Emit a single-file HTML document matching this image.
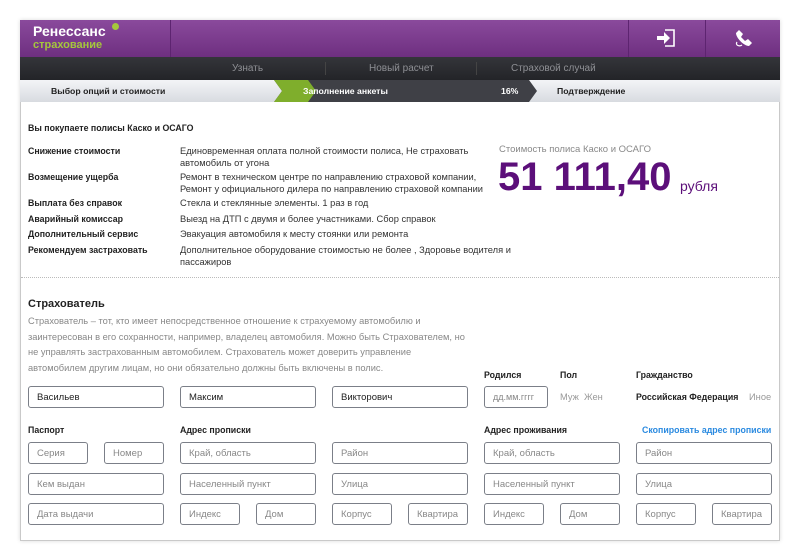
<!DOCTYPE html>
<html><head><meta charset="utf-8"><style>
*{margin:0;padding:0;box-sizing:border-box}
body{width:800px;height:560px;background:#fff;font-family:"Liberation Sans",Arial,sans-serif;position:relative;overflow:hidden}
.box{position:absolute;left:20px;top:20px;width:760px;height:521px;border:1px solid #c9c9c9;box-shadow:0 0 4px rgba(0,0,0,.15);background:#fff}
.a{position:absolute}
.hdr{left:20px;top:20px;width:760px;height:37px;background:linear-gradient(#8a4a9c,#6e2f80)}
.nav{left:20px;top:57px;width:760px;height:23px;background:linear-gradient(#34353a,#232428);color:#8e8f94;font-size:10px}
.steps{left:20px;top:80px;width:760px;height:22px;background:linear-gradient(#f3f4f7,#d8dbe0);font-size:8.7px;font-weight:bold;color:#222}
.lbl{font-size:8.8px;font-weight:bold;color:#222;position:absolute}
.txt{font-size:9.3px;color:#333;position:absolute;line-height:12px}
.in{position:absolute;height:22px;border:1px solid #7b7f88;border-radius:3px;font-size:9.5px;color:#888;padding-left:8px;line-height:21px}
.in.v{color:#222}
</style></head><body>
<div class="box"></div>
<div class="a hdr">
  <div class="a" style="left:13px;top:3px;color:#fff;font-weight:bold;font-size:14px">Ренессанс</div>
  <div class="a" style="left:92px;top:3px;width:7px;height:7px;border-radius:50%;background:#a5c73c"></div>
  <div class="a" style="left:13px;top:19px;color:#a5c73c;font-size:11px;font-weight:bold">страхование</div>
  <div class="a" style="left:150px;top:0;width:1px;height:37px;background:#5d2470"></div>
  <div class="a" style="left:608px;top:0;width:1px;height:37px;background:#5d2470"></div>
  <div class="a" style="left:685px;top:0;width:1px;height:37px;background:#5d2470"></div>
  <svg class="a" style="left:636px;top:9px" width="20" height="18" viewBox="0 0 20 18"><path d="M9 1h9v16h-9" fill="none" stroke="#fff" stroke-width="1.6"/><path d="M1 7h7V3l6 6-6 6v-4H1z" fill="#fff"/></svg>
  <svg class="a" style="left:714px;top:8px" width="20" height="20" viewBox="0 0 20 20"><path d="M5 2l4 4-2 3 4 4 3-2 4 4-3 3C10 18 2 10 2 5z" fill="#fff"/><path d="M3 14c-2 3 2 5 5 3" fill="none" stroke="#fff" stroke-width="1.2"/></svg>
</div>
<div class="a nav">
  <div class="a" style="left:212px;top:6px">Узнать</div>
  <div class="a" style="left:305px;top:5px;width:1px;height:13px;background:#444"></div>
  <div class="a" style="left:349px;top:6px">Новый расчет</div>
  <div class="a" style="left:456px;top:5px;width:1px;height:13px;background:#444"></div>
  <div class="a" style="left:491px;top:6px">Страховой случай</div>
</div>
<div class="a steps">
  <svg class="a" style="left:254px;top:0" width="266" height="22"><polygon points="0,0 255,0 263,11 255,22 0,22 8,11" fill="#3f4046"/><polygon points="0,0 34,0 42,11 34,22 0,22 8,11" fill="#7fae2c"/></svg>
  <div class="a" style="left:31px;top:6px">Выбор опций и стоимости</div>
  <div class="a" style="left:283px;top:6px;color:#fff">Заполнение анкеты</div>
  <div class="a" style="left:481px;top:6px;color:#fff">16%</div>
  <div class="a" style="left:537px;top:6px">Подтверждение</div>
</div>
<div class="lbl" style="left:28px;top:123px">Вы покупаете полисы Каско и ОСАГО</div>
<div class="lbl" style="left:28px;top:146px">Снижение стоимости</div>
<div class="txt" style="left:180px;top:145px">Единовременная оплата полной стоимости полиса, Не страховать<br>автомобиль от угона</div>
<div class="lbl" style="left:28px;top:172px">Возмещение ущерба</div>
<div class="txt" style="left:180px;top:171px">Ремонт в техническом центре по направлению страховой компании,<br>Ремонт у официального дилера по направлению страховой компании</div>
<div class="lbl" style="left:28px;top:198px">Выплата без справок</div>
<div class="txt" style="left:180px;top:197px">Стекла и стеклянные элементы. 1 раз в год</div>
<div class="lbl" style="left:28px;top:214px">Аварийный комиссар</div>
<div class="txt" style="left:180px;top:213px">Выезд на ДТП с двумя и более участниками. Сбор справок</div>
<div class="lbl" style="left:28px;top:229px">Дополнительный сервис</div>
<div class="txt" style="left:180px;top:228px">Эвакуация автомобиля к месту стоянки или ремонта</div>
<div class="lbl" style="left:28px;top:245px">Рекомендуем застраховать</div>
<div class="txt" style="left:180px;top:244px">Дополнительное оборудование стоимостью не более , Здоровье водителя и<br>пассажиров</div>
<div class="a" style="left:499px;top:144px;font-size:9.5px;color:#888">Стоимость полиса Каско и ОСАГО</div>
<div class="a" style="left:498px;top:155px;font-size:40px;font-weight:bold;color:#5c0f7a">51 111,40</div>
<div class="a" style="left:680px;top:178px;font-size:14px;color:#5c0f7a">рубля</div>
<div class="a" style="left:21px;top:277px;width:758px;border-top:1px dotted #bbb"></div>
<div class="a" style="left:28px;top:298px;font-size:11px;font-weight:bold;color:#222">Страхователь</div>
<div class="a" style="left:28px;top:314px;font-size:9.3px;color:#888;line-height:15.7px">Страхователь – тот, кто имеет непосредственное отношение к страхуемому автомобилю и<br>заинтересован в его сохранности, например, владелец автомобиля. Можно быть Страхователем, но<br>не управлять застрахованным автомобилем. Страхователь может доверить управление<br>автомобилем другим лицам, но они обязательно должны быть включены в полис.</div>
<div class="lbl" style="left:484px;top:370px">Родился</div>
<div class="lbl" style="left:560px;top:370px">Пол</div>
<div class="lbl" style="left:636px;top:370px">Гражданство</div>
<div class="a" style="left:560px;top:392px;font-size:9.3px;color:#999">Муж&nbsp; Жен</div>
<div class="lbl" style="left:636px;top:392px">Российская Федерация</div>
<div class="a" style="left:749px;top:392px;font-size:9.3px;color:#999">Иное</div>
<div class="in v" style="left:28px;top:386px;width:136px">Васильев</div>
<div class="in v" style="left:180px;top:386px;width:136px">Максим</div>
<div class="in v" style="left:332px;top:386px;width:136px">Викторович</div>
<div class="in" style="left:484px;top:386px;width:64px;font-size:9px">дд.мм.гггг</div>
<div class="lbl" style="left:28px;top:425px">Паспорт</div>
<div class="lbl" style="left:180px;top:425px">Адрес прописки</div>
<div class="lbl" style="left:484px;top:425px">Адрес проживания</div>
<div class="lbl" style="left:642px;top:425px;color:#2a8ae0">Скопировать адрес прописки</div>
<div class="in" style="left:28px;top:442px;width:60px">Серия</div>
<div class="in" style="left:104px;top:442px;width:60px">Номер</div>
<div class="in" style="left:180px;top:442px;width:136px">Край, область</div>
<div class="in" style="left:332px;top:442px;width:136px">Район</div>
<div class="in" style="left:484px;top:442px;width:136px">Край, область</div>
<div class="in" style="left:636px;top:442px;width:136px">Район</div>
<div class="in" style="left:28px;top:473px;width:136px">Кем выдан</div>
<div class="in" style="left:180px;top:473px;width:136px">Населенный пункт</div>
<div class="in" style="left:332px;top:473px;width:136px">Улица</div>
<div class="in" style="left:484px;top:473px;width:136px">Населенный пункт</div>
<div class="in" style="left:636px;top:473px;width:136px">Улица</div>
<div class="in" style="left:28px;top:503px;width:136px">Дата выдачи</div>
<div class="in" style="left:180px;top:503px;width:60px">Индекс</div>
<div class="in" style="left:256px;top:503px;width:60px">Дом</div>
<div class="in" style="left:332px;top:503px;width:60px">Корпус</div>
<div class="in" style="left:408px;top:503px;width:60px">Квартира</div>
<div class="in" style="left:484px;top:503px;width:60px">Индекс</div>
<div class="in" style="left:560px;top:503px;width:60px">Дом</div>
<div class="in" style="left:636px;top:503px;width:60px">Корпус</div>
<div class="in" style="left:712px;top:503px;width:60px">Квартира</div>
</body></html>
